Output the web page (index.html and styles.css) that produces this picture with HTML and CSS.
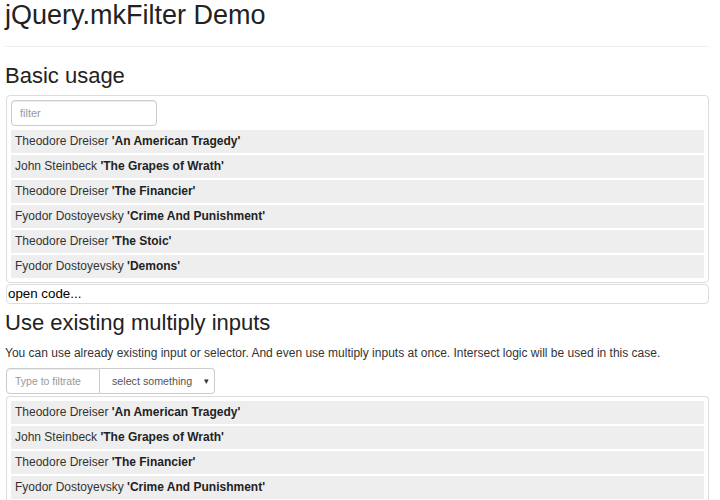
FILE: index.html
```html
<!DOCTYPE html>
<html>
<head>
<meta charset="utf-8">
<title>jQuery.mkFilter Demo</title>
<link rel="stylesheet" href="styles.css">
</head>
<body>
<div class="page">
  <h1 class="title">jQuery.mkFilter Demo</h1>
  <hr class="rule">

  <h2 class="section">Basic usage</h2>
  <div class="panel">
    <input class="filter" type="text" placeholder="filter">
    <ul class="list">
      <li class="item">Theodore Dreiser <b>'An American Tragedy'</b></li>
      <li class="item">John Steinbeck <b>'The Grapes of Wrath'</b></li>
      <li class="item">Theodore Dreiser <b>'The Financier'</b></li>
      <li class="item">Fyodor Dostoyevsky <b>'Crime And Punishment'</b></li>
      <li class="item">Theodore Dreiser <b>'The Stoic'</b></li>
      <li class="item">Fyodor Dostoyevsky <b>'Demons'</b></li>
    </ul>
  </div>
  <div class="code-toggle">open code...</div>

  <h2 class="section section-second">Use existing multiply inputs</h2>
  <p class="lead">You can use already existing input or selector. And even use multiply inputs at once. Intersect logic will be used in this case.</p>
  <div class="input-group">
    <input class="group-input" type="text" placeholder="Type to filtrate">
    <div class="group-select"><span>select something</span><span class="caret">&#9662;</span></div>
  </div>
  <div class="panel panel-second">
    <ul class="list">
      <li class="item">Theodore Dreiser <b>'An American Tragedy'</b></li>
      <li class="item">John Steinbeck <b>'The Grapes of Wrath'</b></li>
      <li class="item">Theodore Dreiser <b>'The Financier'</b></li>
      <li class="item">Fyodor Dostoyevsky <b>'Crime And Punishment'</b></li>
      <li class="item">Theodore Dreiser <b>'The Stoic'</b></li>
      <li class="item">Fyodor Dostoyevsky <b>'Demons'</b></li>
    </ul>
  </div>
</div>
</body>
</html>
```

FILE: styles.css
```css
html, body {
  margin: 0;
  padding: 0;
  background: #fff;
}
body {
  font-family: "Liberation Sans", Arial, sans-serif;
  font-size: 12px;
  color: #333;
  height: 500px;
  overflow: hidden;
}
.page {
  padding: 0 11px 0 6px;
}
.title {
  font-size: 27px;
  font-weight: normal;
  line-height: 1.1;
  margin: 1px 0 0 -1px;
  color: #222;
}
.rule {
  border: 0;
  border-top: 1px solid #eee;
  margin: 15px 0 0 -1px;
  height: 0;
}
.section {
  font-size: 22px;
  font-weight: normal;
  line-height: 25px;
  margin: 16px 0 7px -1px;
  color: #222;
}
.section-second {
  margin-top: 6px;
  margin-bottom: 10px;
}
.panel {
  border: 1px solid #ddd;
  border-radius: 4px;
  padding: 4px;
  display: flex;
  flex-direction: column;
  gap: 4px;
}
.filter {
  width: 146px;
  height: 26px;
  box-sizing: border-box;
  border: 1px solid #ccc;
  border-radius: 4px;
  padding: 0 8px;
  font-family: "Liberation Sans", Arial, sans-serif;
  font-size: 11px;
  color: #555;
  box-shadow: inset 0 1px 1px rgba(0,0,0,.075);
  outline: none;
}
.filter::placeholder, .group-input::placeholder {
  color: #999;
}
.list {
  list-style: none;
  margin: 0;
  padding: 0;
  display: flex;
  flex-direction: column;
  gap: 2px;
}
.item {
  background: #eee;
  height: 23px;
  line-height: 23px;
  padding: 0 4px;
  color: #333;
}
.item b {
  color: #222;
}
.code-toggle {
  margin-top: 1px;
  border: 1px solid #ddd;
  border-radius: 4px;
  height: 18px;
  line-height: 18px;
  padding: 0 1px;
  font-size: 13.33px;
  color: #000;
}
.lead {
  margin: 0 0 6px -1px;
  line-height: 17px;
}
.input-group {
  display: flex;
  height: 26px;
  margin-bottom: 2px;
}
.group-input {
  width: 94px;
  height: 26px;
  box-sizing: border-box;
  border: 1px solid #ccc;
  border-radius: 4px 0 0 4px;
  padding: 0 8px;
  font-family: "Liberation Sans", Arial, sans-serif;
  font-size: 10.5px;
  box-shadow: inset 0 1px 1px rgba(0,0,0,.075);
  outline: none;
}
.group-select {
  width: 115px;
  height: 26px;
  box-sizing: border-box;
  border: 1px solid #ccc;
  border-left: 0;
  border-radius: 0 4px 4px 0;
  display: flex;
  align-items: center;
  justify-content: space-between;
  padding: 0 5px 0 12px;
  white-space: nowrap;
  font-size: 10.7px;
  color: #555;
}
.caret {
  font-size: 9px;
  color: #333;
}
.panel-second {
  padding-bottom: 0;
  border-bottom: 0;
}
```
